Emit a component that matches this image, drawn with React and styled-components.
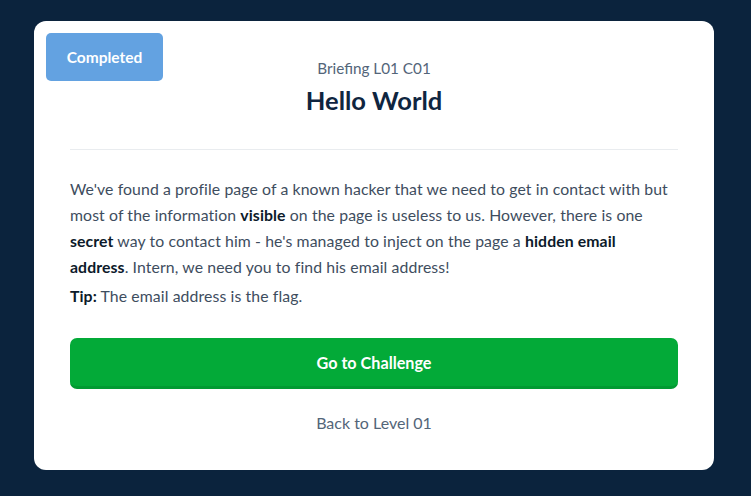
import React from 'react';
import styled, { createGlobalStyle } from 'styled-components';

const GlobalStyle = createGlobalStyle`
  html, body {
    margin: 0;
    padding: 0;
    background: #0b233d;
  }
  body {
    font-family: "Lato", "Liberation Sans", sans-serif;
  }
`

const Page = styled.div`
  width: 751px;
  height: 496px;
  box-sizing: border-box;
  padding: 21px 37px 0 34px;
`

const Card = styled.div`
  position: relative;
  width: 680px;
  height: 449px;
  box-sizing: border-box;
  background: #fff;
  border-radius: 12px;
  padding: 31px 36px 0 36px;
  display: flex;
  flex-direction: column;
`

const StatusBadge = styled.div`
  position: absolute;
  left: 12px;
  top: 12px;
  width: 117px;
  height: 48px;
  border-radius: 5px;
  background: #63a2e1;
  color: #fff;
  font-size: 15.5px;
  font-weight: 700;
  display: flex;
  align-items: center;
  justify-content: center;
`

const Header = styled.div`
  display: flex;
  flex-direction: column;
  align-items: center;
  padding-bottom: 33px;
  border-bottom: 1px solid #e9ecef;
`

const SubTitle = styled.div`
  margin-top: 6px;
  font-size: 15.3px;
  color: #536579;
  line-height: 20px;
`

const Title = styled.h1`
  margin: 6px 0 0 0;
  font-size: 25.5px;
  font-weight: 700;
  color: #0f2540;
  line-height: 32px;
`

const Body = styled.div`
  padding-top: 26px;
  font-size: 15.8px;
  letter-spacing: 0.1px;
  line-height: 26px;
  color: #3e4d5e;
`

const Paragraph = styled.p`
  margin: 0 0 ${p => p.gap || 0}px 0;
`

const Strong = styled.b`
  font-weight: 700;
  color: #0c1a2a;
`

const ChallengeButton = styled.button`
  margin-top: 29px;
  width: 100%;
  height: 51px;
  border: none;
  border-bottom: 3px solid #029a32;
  border-radius: 7px;
  background: #03aa38;
  color: #fff;
  font-family: inherit;
  font-size: 16.2px;
  font-weight: 700;
  cursor: pointer;
`

const BackLink = styled.a`
  margin-top: 24px;
  align-self: center;
  font-size: 16px;
  color: #536579;
  text-decoration: none;
  line-height: 20px;
`

export default function App() {
  return (<>
    <GlobalStyle />
    <Page>
      <Card>
        <StatusBadge>Completed</StatusBadge>
        <Header>
          <SubTitle>Briefing L01 C01</SubTitle>
          <Title>Hello World</Title>
        </Header>
        <Body>
          <Paragraph gap={3}>
            We've found a profile page of a known hacker that we need to get in contact with but<br />
            most of the information <Strong>visible</Strong> on the page is useless to us. However, there is one<br />
            <Strong>secret</Strong> way to contact him - he's managed to inject on the page a <Strong>hidden email</Strong><br />
            <Strong>address</Strong>. Intern, we need you to find his email address!
          </Paragraph>
          <Paragraph>
            <Strong>Tip:</Strong> The email address is the flag.
          </Paragraph>
        </Body>
        <ChallengeButton>Go to Challenge</ChallengeButton>
        <BackLink href="#">Back to Level 01</BackLink>
      </Card>
    </Page>
  </>)
}
